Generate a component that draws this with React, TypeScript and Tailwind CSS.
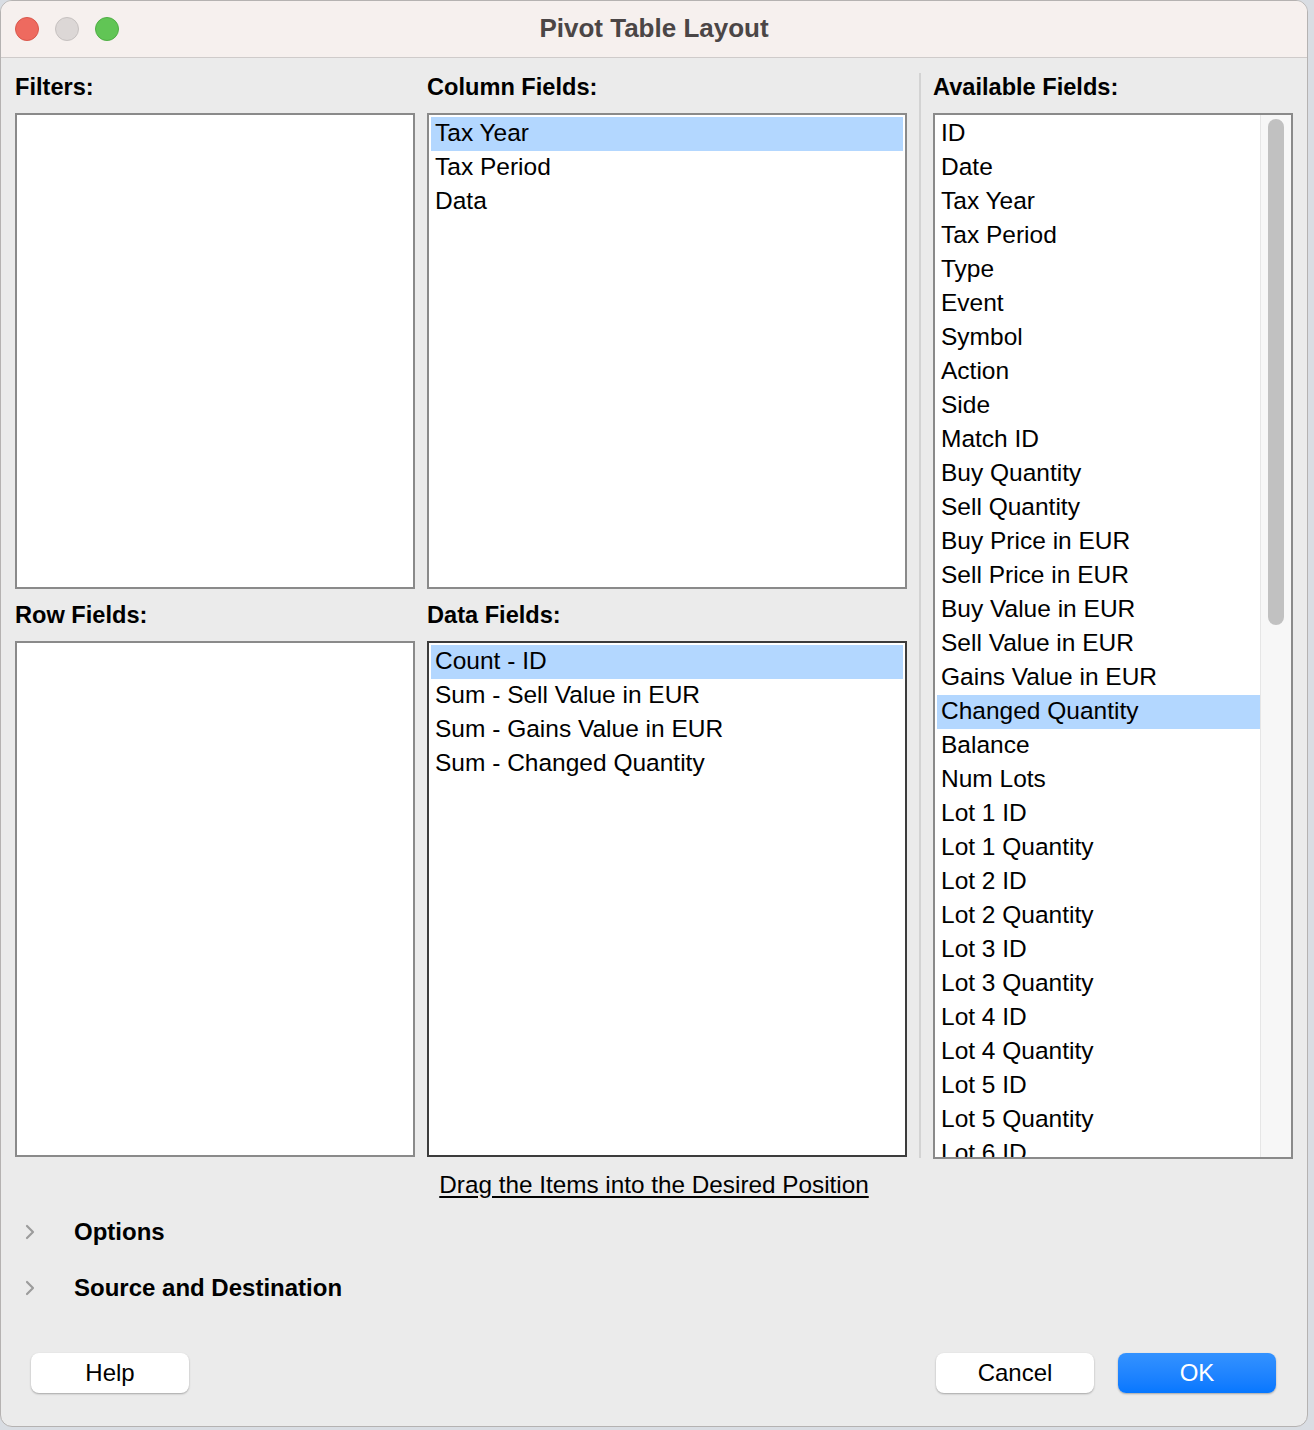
import { ChevronRight } from 'lucide-react';

const FONT = { fontFamily: '"Liberation Sans", Arial, sans-serif' };

const COLUMN_FIELDS = ['Tax Year', 'Tax Period', 'Data'];
const DATA_FIELDS = [
  'Count - ID',
  'Sum - Sell Value in EUR',
  'Sum - Gains Value in EUR',
  'Sum - Changed Quantity',
];
const AVAILABLE = [
  'ID',
  'Date',
  'Tax Year',
  'Tax Period',
  'Type',
  'Event',
  'Symbol',
  'Action',
  'Side',
  'Match ID',
  'Buy Quantity',
  'Sell Quantity',
  'Buy Price in EUR',
  'Sell Price in EUR',
  'Buy Value in EUR',
  'Sell Value in EUR',
  'Gains Value in EUR',
  'Changed Quantity',
  'Balance',
  'Num Lots',
  'Lot 1 ID',
  'Lot 1 Quantity',
  'Lot 2 ID',
  'Lot 2 Quantity',
  'Lot 3 ID',
  'Lot 3 Quantity',
  'Lot 4 ID',
  'Lot 4 Quantity',
  'Lot 5 ID',
  'Lot 5 Quantity',
  'Lot 6 ID',
  'Lot 6 Quantity',
];

function Label({ children }: { children: string }) {
  return (
    <div className="h-[28px] text-[23.6px] font-bold leading-[27px] text-black">
      {children}
    </div>
  );
}

function ListItem({ text, selected }: { text: string; selected?: boolean }) {
  return (
    <div
      className={`flex h-[34px] shrink-0 items-center whitespace-nowrap pb-[2px] pl-[4px] text-[24.5px] text-black ${
        selected ? 'bg-[#b3d7ff]' : ''
      }`}
    >
      {text}
    </div>
  );
}

function ListBox({
  items,
  selected,
  height,
  dark,
}: {
  items: string[];
  selected?: string;
  height: string;
  dark?: boolean;
}) {
  return (
    <div
      className={`flex flex-col overflow-hidden border-2 bg-white p-[2px] ${height} ${
        dark ? 'border-[#3c3c3c]' : 'border-[#8a8a8a]'
      }`}
    >
      {items.map((t) => (
        <ListItem key={t} text={t} selected={t === selected} />
      ))}
    </div>
  );
}

function MacButton({ children, primary }: { children: string; primary?: boolean }) {
  return (
    <button
      type="button"
      className={`flex h-[40px] w-[158px] items-center justify-center rounded-[8px] text-[24px] shadow-[0_1px_2px_rgba(0,0,0,0.3)] ${
        primary
          ? 'bg-linear-to-b from-[#3392ff] to-[#0677ff] text-white'
          : 'bg-white text-black'
      }`}
    >
      {children}
    </button>
  );
}

export default function App() {
  return (
    <div className="flex h-[1430px] w-[1314px] overflow-hidden bg-[#d9dde3]" style={FONT}>
      <div className="flex h-[1427px] w-[1308px] flex-col overflow-hidden rounded-[12px] border border-[#b5b2b1] bg-[#ebebeb]">
        {/* title bar */}
        <div className="grid h-[57px] shrink-0 grid-cols-[1fr_auto_1fr] items-center border-b border-[#cfcbca] bg-[#f6f0ee]">
          <div className="flex items-center gap-[16px] pl-[14px]">
            <span className="h-[24px] w-[24px] rounded-full border border-[#d9574b] bg-[#ee6a5f]" />
            <span className="h-[24px] w-[24px] rounded-full border border-[#c6c1c0] bg-[#dcd7d6]" />
            <span className="h-[24px] w-[24px] rounded-full border border-[#4fae44] bg-[#61c555]" />
          </div>
          <div className="pb-[1px] text-[26px] font-bold text-[#4b4646]">Pivot Table Layout</div>
          <div />
        </div>

        {/* fields */}
        <div className="flex px-[14px] pt-[16px]">
          <div className="flex w-[400px] flex-col">
            <Label>Filters:</Label>
            <div className="mt-[11px]">
              <ListBox items={[]} height="h-[476px]" />
            </div>
            <div className="mt-[13px]">
              <Label>Row Fields:</Label>
            </div>
            <div className="mt-[11px]">
              <ListBox items={[]} height="h-[516px]" />
            </div>
          </div>

          <div className="ml-[12px] flex w-[480px] flex-col">
            <Label>Column Fields:</Label>
            <div className="mt-[11px]">
              <ListBox items={COLUMN_FIELDS} selected="Tax Year" height="h-[476px]" />
            </div>
            <div className="mt-[13px]">
              <Label>Data Fields:</Label>
            </div>
            <div className="mt-[11px]">
              <ListBox items={DATA_FIELDS} selected="Count - ID" height="h-[516px]" dark />
            </div>
          </div>

          <div className="ml-[12px] mt-[-1px] h-[1085px] w-[2px] bg-[#d3d3d3]" />

          <div className="ml-[12px] flex w-[360px] flex-col">
            <Label>Available Fields:</Label>
            <div className="mt-[11px] flex h-[1046px] border-2 border-[#8a8a8a] bg-white">
              <div className="flex flex-1 flex-col overflow-hidden p-[2px] pr-0">
                {AVAILABLE.map((t) => (
                  <ListItem key={t} text={t} selected={t === 'Changed Quantity'} />
                ))}
              </div>
              <div className="flex w-[31px] shrink-0 justify-center border-l border-[#e6e6e6] bg-[#f7f7f7] pt-[4px]">
                <div className="h-[506px] w-[16px] rounded-full bg-[#c1c1c1]" />
              </div>
            </div>
          </div>
        </div>

        {/* hint */}
        <div className="mt-[11px] flex justify-center">
          <span className="text-[24.3px] leading-[30px] text-black underline underline-offset-[3px]">
            Drag the Items into the Desired Position
          </span>
        </div>

        {/* expanders */}
        <div className="mt-[18px] flex flex-col gap-[28px] pl-[17px]">
          {['Options', 'Source and Destination'].map((t) => (
            <div key={t} className="flex h-[28px] items-center">
              <ChevronRight className="h-[24px] w-[24px] text-[#9c9c9c]" strokeWidth={2.2} />
              <span className="ml-[32px] text-[24px] font-bold text-black">{t}</span>
            </div>
          ))}
        </div>

        {/* buttons */}
        <div className="mt-auto mb-[33px] flex items-center px-[30px]">
          <MacButton>Help</MacButton>
          <div className="flex-1" />
          <div className="mr-[1px] flex gap-[24px]">
            <MacButton>Cancel</MacButton>
            <MacButton primary>OK</MacButton>
          </div>
        </div>
      </div>
    </div>
  );
}
